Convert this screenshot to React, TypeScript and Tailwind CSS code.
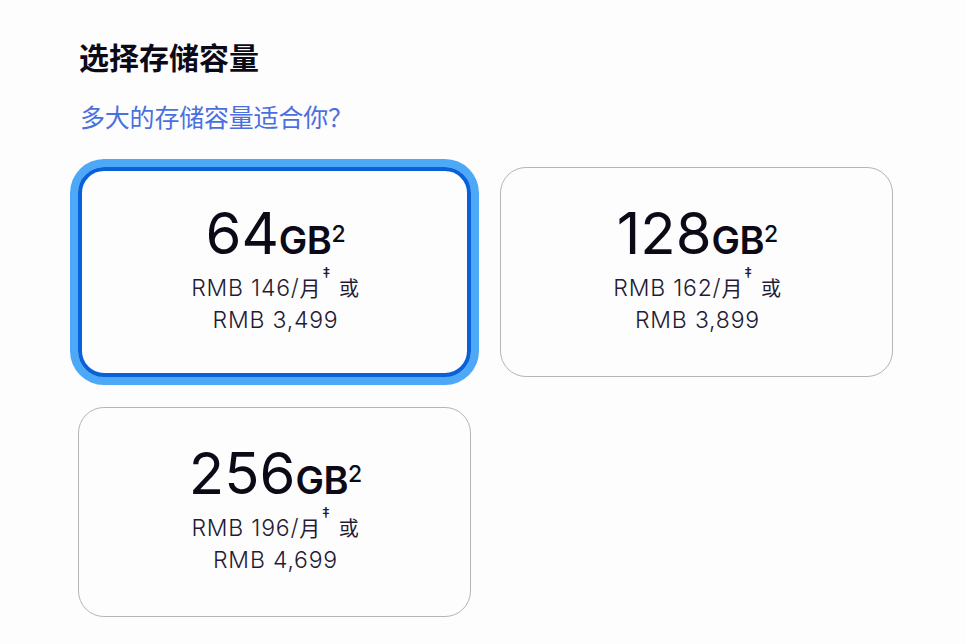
const plans = [
  { size: "64", monthly: "146", price: "3,499", selected: true },
  { size: "128", monthly: "162", price: "3,899", selected: false },
  { size: "256", monthly: "196", price: "4,699", selected: false },
];

export default function App() {
  return (
    <main className="h-[644px] w-[966px] overflow-hidden bg-[#fdfdfd] pl-[78px] pt-[38px] font-[Inter,'Noto_Sans_CJK_SC',sans-serif] text-[#0d0a18]">
      <h1 className="pl-px text-[30px] font-semibold leading-10">选择存储容量</h1>
      <a href="#" className="mt-5 block pl-[2px] text-[25px] leading-10 tracking-[-0.2px] text-[#4a70e0]">
        多大的存储容量适合你？
      </a>
      <div className="mt-[29px] grid w-[815px] grid-cols-2 gap-x-[29px] gap-y-[30px]">
        {plans.map((plan) => (
          <button
            key={plan.size}
            className={`flex h-[210px] flex-col items-center rounded-[26px] pl-[2px] ${
              plan.selected
                ? "border-4 border-[#0861d8] pt-[30px] ring-8 ring-[#4da9f8]"
                : "border border-[#b4b4bb] pt-[33px]"
            }`}
          >
            <span className="flex h-[71px] items-baseline whitespace-nowrap leading-[64px]">
              <span className="text-[58px]">{plan.size}</span>
              <span className="text-[38px] font-semibold tracking-[-0.5px]">GB</span>
              <span className="relative -top-3 text-[23px] font-medium leading-none">2</span>
            </span>
            <span className="flex h-8 items-baseline whitespace-pre text-[23px] font-light leading-8 tracking-[0.8px] text-[#241a36]">
              <span>RMB {plan.monthly}/</span>
              <span className="text-[21px] font-normal">月</span>
              <span className="relative -top-[18px] left-px text-[15px] font-medium leading-none">‡</span>
              <span className="ml-[9px] text-[20px] font-normal">或</span>
            </span>
            <span className="text-[23px] font-light leading-8 tracking-[0.8px] text-[#241a36]">RMB {plan.price}</span>
          </button>
        ))}
      </div>
    </main>
  );
}
